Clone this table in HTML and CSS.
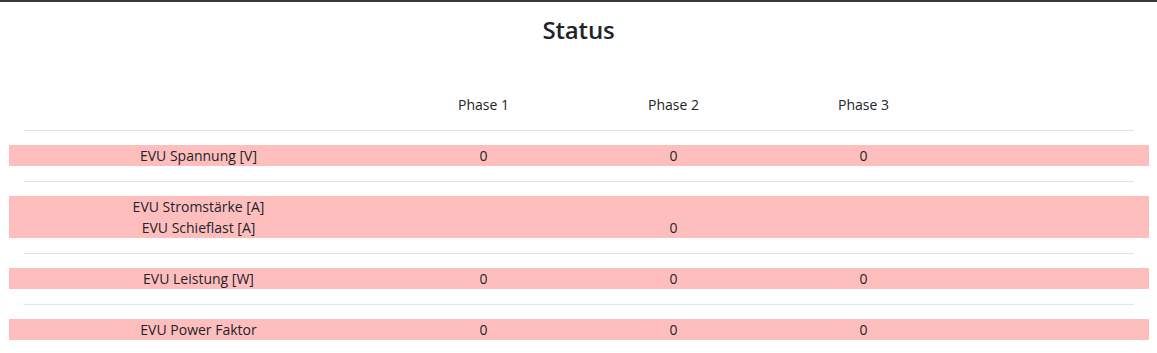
FILE: index.html
```html
<!DOCTYPE html>
<html lang="de">
<head>
<meta charset="utf-8">
<title>Status</title>
<link rel="stylesheet" href="styles.css">
</head>
<body>
<div class="topbar"></div>
<div class="container">
  <h1 class="title">Status</h1>
  <div class="grid-row head">
    <div></div>
    <div>Phase 1</div>
    <div>Phase 2</div>
    <div>Phase 3</div>
    <div></div>
  </div>
  <hr class="sep">
  <div class="grid-row alert">
    <div>EVU Spannung [V]</div>
    <div>0</div>
    <div>0</div>
    <div>0</div>
    <div></div>
  </div>
  <hr class="sep">
  <div class="grid-row alert">
    <div>EVU Stromstärke [A]<br>EVU Schieflast [A]</div>
    <div></div>
    <div><br>0</div>
    <div></div>
    <div></div>
  </div>
  <hr class="sep">
  <div class="grid-row alert">
    <div>EVU Leistung [W]</div>
    <div>0</div>
    <div>0</div>
    <div>0</div>
    <div></div>
  </div>
  <hr class="sep">
  <div class="grid-row alert">
    <div>EVU Power Faktor</div>
    <div>0</div>
    <div>0</div>
    <div>0</div>
    <div></div>
  </div>
</div>
</body>
</html>
```

FILE: styles.css
```css
html, body {
  margin: 0;
  padding: 0;
  background: #ffffff;
}

body {
  font-family: "Open Sans", "Noto Sans", "Liberation Sans", sans-serif;
  color: #212529;
  font-size: 14px;
}

.topbar {
  height: 2px;
  background: #343a40;
}

.container {
  width: 1140px;
  margin: 0 auto;
}

.title {
  margin: 13px 0 0;
  text-align: center;
  font-size: 24px;
  font-weight: 600;
  letter-spacing: -0.2px;
  line-height: 29px;
}

.grid-row {
  display: grid;
  grid-template-columns: 380px 190px 190px 190px 190px;
  text-align: center;
  line-height: 21px;
  font-size: 14px;
}

.head {
  margin-top: 50px;
}

.alert {
  background: #ffbebe;
}

.sep {
  border: 0;
  border-top: 1px solid #e1e3e6;
  margin: 14.6px 15px 14.4px;
  height: 0;
}
```
